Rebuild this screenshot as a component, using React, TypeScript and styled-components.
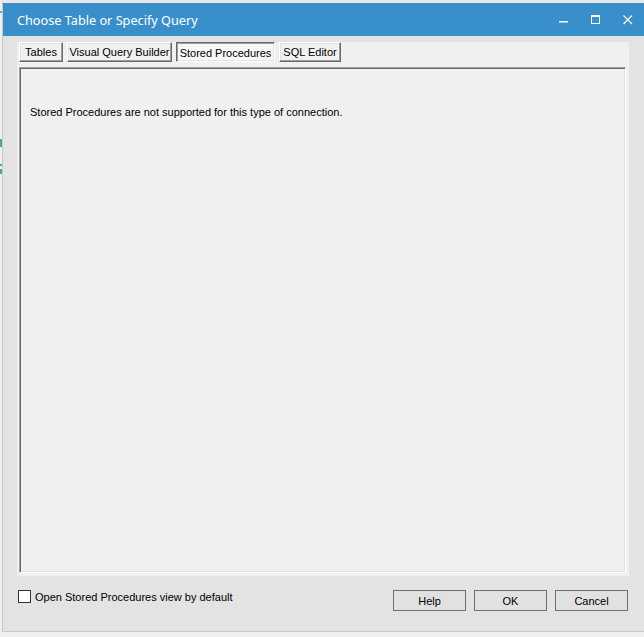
import React from "react";
import styled, { createGlobalStyle } from "styled-components";

const Global = createGlobalStyle`
  html, body { margin: 0; padding: 0; background: #f0f0f0; }
  * { box-sizing: border-box; }
`;

const Page = styled.div`
  width: 644px;
  height: 637px;
  background: #f0f0f0;
  display: flex;
  overflow: hidden;
`;

const Backdrop = styled.div`
  width: 2px;
  display: flex;
  flex-direction: column;
  background: #f0f0f0;
`;

const Fleck = styled.div<{ $top: number; $h: number; $c: string }>`
  margin-top: ${(p) => p.$top}px;
  height: ${(p) => p.$h}px;
  background: ${(p) => p.$c};
`;

const Window = styled.div`
  flex: 1;
  height: 632px;
  display: flex;
  flex-direction: column;
  background: #e3e3e3;
  border-top: 3px solid #e9e9e9;
  border-left: 1px solid #c9c9c9;
  border-bottom: 1px solid #c9c9c9;
`;

const TitleBar = styled.div`
  height: 33px;
  background: #398fca;
  display: flex;
  align-items: center;
  padding-left: 14px;
  color: #fff;
  font-family: "Noto Sans", "Open Sans", sans-serif;
  font-size: 12.7px;
  flex-shrink: 0;
`;

const Title = styled.div`
  flex: 1;
  padding-top: 1px;
`;

const Controls = styled.div`
  display: flex;
  align-items: center;
  height: 100%;
`;

const Ctl = styled.div`
  width: 32px;
  height: 100%;
  display: flex;
  align-items: center;
  justify-content: center;
`;

const Body = styled.div`
  flex: 1;
  display: flex;
  flex-direction: column;
  padding: 6px 15px 0 14px;
`;

const Panel = styled.div`
  height: 534px;
  background: #f0f0f0;
  display: flex;
  flex-direction: column;
  padding: 0 3px 3px 2px;
`;

const Tabs = styled.div`
  display: flex;
  gap: 4px;
  height: 20px;
`;

const Tab = styled.div<{ $active?: boolean; $w: number }>`
  width: ${(p) => p.$w}px;
  height: 20px;
  display: flex;
  align-items: center;
  justify-content: center;
  font-family: "Liberation Sans", Arial, sans-serif;
  font-size: 11px;
  color: #000;
  background: ${(p) => (p.$active ? "#f8f8f8" : "#f0f0f0")};
  border-style: solid;
  border-width: 1px;
  border-color: ${(p) =>
    p.$active ? "#696969 #ffffff #ffffff #696969" : "#ffffff #696969 #696969 #ffffff"};
  box-shadow: ${(p) =>
    p.$active
      ? "inset 1px 1px 0 #a0a0a0, inset -1px -1px 0 #e3e3e3"
      : "inset -1px -1px 0 #a0a0a0, inset 1px 1px 0 #e3e3e3"};
  padding-top: ${(p) => (p.$active ? "1px" : "0")};
`;

const Content = styled.div`
  flex: 1;
  margin-top: 5px;
  border-style: solid;
  border-width: 1px;
  border-color: #a0a0a0 #ffffff #ffffff #a0a0a0;
  box-shadow: inset 1px 1px 0 #696969, inset -1px -1px 0 #e3e3e3;
  padding: 38px 8px 0 10px;
  font-family: "Liberation Sans", Arial, sans-serif;
  font-size: 11px;
  color: #000;
`;

const Footer = styled.div`
  display: flex;
  align-items: flex-start;
  padding: 14px 1px 0 1px;
`;

const CheckRow = styled.label`
  flex: 1;
  display: flex;
  align-items: center;
  gap: 4px;
  font-family: "Liberation Sans", Arial, sans-serif;
  font-size: 11px;
  color: #000;
`;

const Box = styled.span`
  width: 13px;
  height: 13px;
  background: #fff;
  border: 1px solid #333;
  display: inline-block;
`;

const Buttons = styled.div`
  display: flex;
  gap: 8px;
`;

const Button = styled.div`
  width: 73px;
  height: 21px;
  background: #e1e1e1;
  border: 1px solid #707070;
  display: flex;
  align-items: center;
  justify-content: center;
  font-family: "Liberation Sans", Arial, sans-serif;
  font-size: 11px;
  color: #000;
`;

export default function App() {
  return (
    <>
      <Global />
      <Page>
        <Backdrop>
          <Fleck $top={11} $h={2} $c="#56a2e0" />
          <Fleck $top={126} $h={8} $c="#4aa79a" />
          <Fleck $top={17} $h={2} $c="#4aa79a" />
          <Fleck $top={3} $h={5} $c="#4aa79a" />
        </Backdrop>
        <Window>
          <TitleBar>
            <Title>Choose Table or Specify Query</Title>
            <Controls>
              <Ctl>
                <svg width="10" height="10" viewBox="0 0 10 10">
                  <rect x="0" y="6" width="9" height="1.5" fill="#fff" />
                </svg>
              </Ctl>
              <Ctl>
                <svg width="10" height="10" viewBox="0 0 10 10">
                  <rect x="0.5" y="0.5" width="8" height="8" fill="none" stroke="#fff" strokeWidth="1" />
                  <rect x="0" y="0" width="9" height="2" fill="#fff" />
                </svg>
              </Ctl>
              <Ctl>
                <svg width="10" height="10" viewBox="0 0 10 10">
                  <path d="M0.5 0.5 L9 9 M9 0.5 L0.5 9" stroke="#fff" strokeWidth="1.2" />
                </svg>
              </Ctl>
            </Controls>
          </TitleBar>
          <Body>
            <Panel>
              <Tabs>
                <Tab $w={44}>Tables</Tab>
                <Tab $w={105}>Visual Query Builder</Tab>
                <Tab $w={99} $active>
                  Stored Procedures
                </Tab>
                <Tab $w={62}>SQL Editor</Tab>
              </Tabs>
              <Content>Stored Procedures are not supported for this type of connection.</Content>
            </Panel>
            <Footer>
              <CheckRow>
                <Box />
                Open Stored Procedures view by default
              </CheckRow>
              <Buttons>
                <Button>Help</Button>
                <Button>OK</Button>
                <Button>Cancel</Button>
              </Buttons>
            </Footer>
          </Body>
        </Window>
      </Page>
    </>
  );
}
